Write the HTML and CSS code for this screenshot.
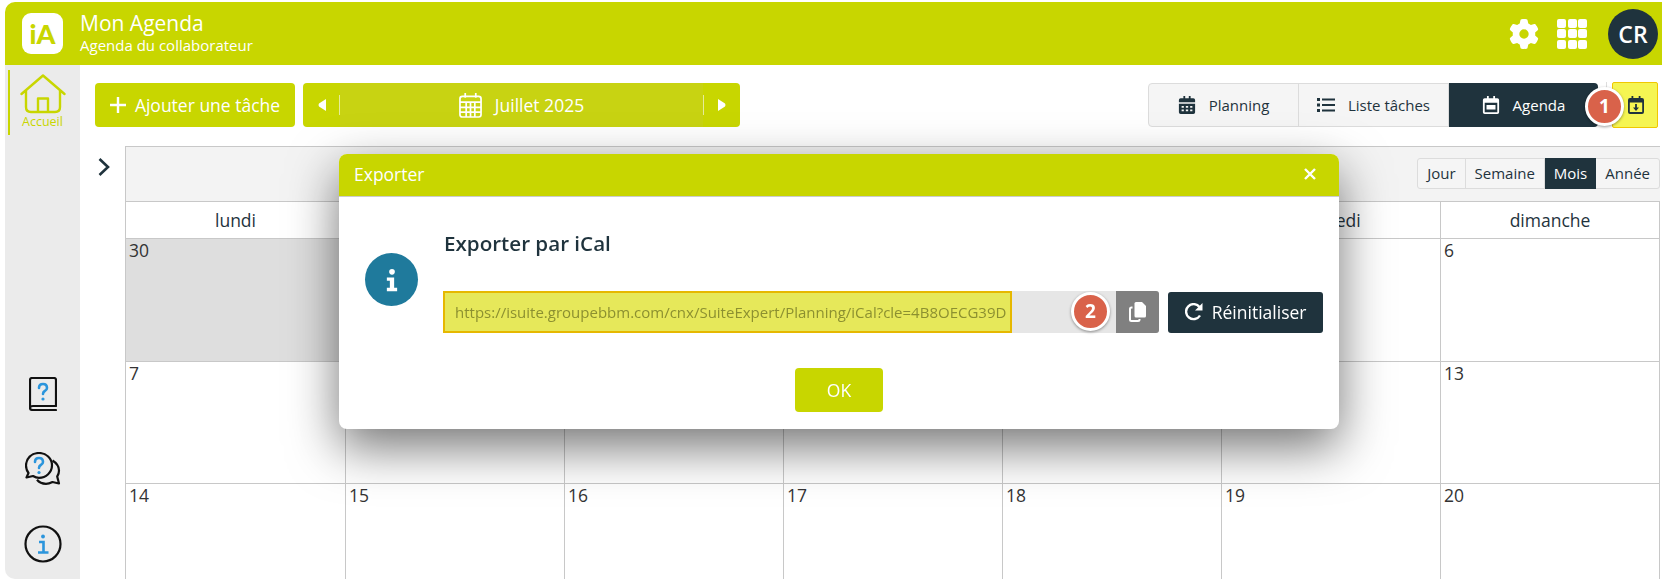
FILE: index.html
```html
<!DOCTYPE html>
<html lang="fr">
<head>
  <meta charset="UTF-8" />
  <meta name="viewport" content="width=device-width, initial-scale=1.0"/>
  <title>Mon Agenda</title>
  <link rel="stylesheet" href="styles.css">
</head>
<body>
  <div class="app">
    <header class="topbar">
      <div class="logo">iA</div>
      <div class="titles">
        <div class="title">Mon Agenda</div>
        <div class="subtitle">Agenda du collaborateur</div>
      </div>
      <svg class="gear" viewBox="0 0 512 512"><path fill="#fff" fill-rule="evenodd" d="M495.9 166.6c3.2 8.700.5 18.400-6.400 24.600l-43.300 39.400c1.100 8.300 1.700 16.800 1.700 25.400s-.6 17.100-1.700 25.400l43.300 39.400c6.900 6.200 9.600 15.900 6.400 24.600-4.400 11.900-9.700 23.300-15.800 34.300l-4.700 8.100c-6.600 11-14 21.400-22.100 31.200-5.900 7.200-15.700 9.600-24.500 6.800l-55.700-17.700c-13.400 10.300-28.200 18.900-44 25.400l-12.500 57.100c-2 9.100-9 16.300-18.200 17.800-13.800 2.300-28 3.500-42.500 3.500s-28.700-1.200-42.500-3.500c-9.200-1.500-16.200-8.700-18.200-17.800l-12.500-57.100c-15.800-6.500-30.600-15.100-44-25.400l-55.600 17.800c-8.800 2.800-18.600.3-24.500-6.800-8.100-9.800-15.500-20.200-22.100-31.200l-4.700-8.100c-6.100-11-11.400-22.400-15.800-34.300-3.200-8.700-.5-18.400 6.400-24.600l43.300-39.400c-1.100-8.400-1.700-16.900-1.700-25.500s.6-17.100 1.700-25.400l-43.300-39.400c-6.900-6.200-9.600-15.900-6.400-24.600 4.400-11.900 9.700-23.300 15.800-34.300l4.700-8.100c6.600-11 14-21.400 22.100-31.200 5.900-7.200 15.700-9.600 24.500-6.800l55.700 17.700c13.400-10.300 28.200-18.900 44-25.400l12.500-57.100c2-9.100 9-16.300 18.200-17.800C227.300 1.200 241.500 0 256 0s28.700 1.200 42.500 3.500c9.200 1.500 16.200 8.700 18.200 17.800l12.500 57.100c15.800 6.500 30.600 15.100 44 25.400l55.700-17.700c8.800-2.800 18.600-.3 24.500 6.800 8.100 9.800 15.500 20.200 22.100 31.200l4.700 8.100c6.100 11 11.400 22.400 15.800 34.300zM256 336a80 80 0 1 0 0-160 80 80 0 1 0 0 160z"/></svg>
      <div class="apps">
        <i></i><i></i><i></i><i></i><i></i><i></i><i></i><i></i><i></i>
      </div>
      <div class="avatar">CR</div>
    </header>

    <div class="main">
      <aside class="sidebar">
        <div class="home">
          <svg class="home-icon" viewBox="0 0 46 40"><path fill="none" stroke="#c8d600" stroke-width="2.4" stroke-linecap="round" stroke-linejoin="round" d="M1.500 20 23 1.500 44.500 20M6 16.500V33q0 5 5 5h24q5 0 5-5V16.500M18 38V24.500h10V38"/></svg>
          <span>Accueil</span>
        </div>
        <div class="side-bottom">
          <svg class="book" viewBox="0 0 28 34"><path fill="none" stroke="#111" stroke-width="2.200" stroke-linecap="round" d="M27 29H4q-3 0-3 2t3 2h23M1 31V3q0-2 2-2h22q2 0 2 2v26"/><path fill="none" stroke="#2b95dc" stroke-width="2.600" stroke-linecap="round" d="M10 11q0-4 4-4t4 4q0 2-2.200 3-1.800 1-1.800 3"/><circle cx="14" cy="22" r="1.600" fill="#2b95dc"/></svg>
          <svg class="chat" viewBox="0 0 36 34"><path fill="none" stroke="#111" stroke-width="2.200" stroke-linejoin="round" d="M14 1C6.500 1 1 6.500 1 13.500c0 3 1 5.500 2.500 7.500L1.500 25.500l6.500-1.500c2 1.200 4 1.800 6 1.800 7 0 13-5.500 13-12.500S21 1 14 1z"/><path fill="none" stroke="#111" stroke-width="2.200" stroke-linejoin="round" d="M27.500 8.500c4 2.500 6.500 6 6.500 10 0 2.300-.6 4.300-1.800 6l1.800 7-6.500-1.500c-2 1-4 1.800-6.500 1.800-4 0-7-1.500-9-4"/><path fill="none" stroke="#2b95dc" stroke-width="2.600" stroke-linecap="round" d="M10 10q0-4 4-4t4 4q0 2-2.200 3-1.800 1-1.800 3"/><circle cx="14" cy="20.500" r="1.600" fill="#2b95dc"/></svg>
          <svg class="about" viewBox="0 0 38 38"><circle cx="19" cy="19" r="17.500" fill="none" stroke="#111" stroke-width="2.200"/><circle cx="19" cy="11.500" r="1.900" fill="#2b95dc"/><path fill="none" stroke="#2b95dc" stroke-width="2.600" d="M15 17h4.500v10M14 27.500h10.500"/></svg>
        </div>
      </aside>

      <section class="content">
        <div class="toolbar">
          <button class="add-btn">
            <svg class="plus" viewBox="0 0 16 16"><path stroke="#fff" stroke-width="2.400" d="M8 0v16M0 8h16"/></svg>
            Ajouter une tâche
          </button>
          <div class="month-nav">
            <div class="nav-arrow left"><svg viewBox="0 0 8 12"><path fill="#fff" d="M8 0v12L1 7.500Q0 6 1 4.500z"/></svg></div>
            <div class="nav-month">
              <svg class="cal-outline" viewBox="0 0 24 26"><path fill="none" stroke="#fff" stroke-width="1.800" d="M3.500 3.500h17q2.500 0 2.500 2.500v16.500q0 2.500-2.500 2.500h-17Q1 25 1 22.500V6q0-2.500 2.500-2.500zM1 9.500h22M1 15h22M1 20h22M7.500 9.500V25M12 9.500V25M16.500 9.500V25M6.500 0v5M17.500 0v5"/></svg>
              Juillet 2025
            </div>
            <div class="nav-arrow right"><svg viewBox="0 0 8 12"><path fill="#fff" d="M0 0v12l7-4.500Q8 6 7 4.500z"/></svg></div>
          </div>
          <div class="tabs">
            <div class="tab">
              <svg viewBox="0 0 18 20"><path fill="#1f333d" fill-rule="evenodd" d="M5 0h2v2.500h4V0h2v2.500h3q2 0 2 2V7H0V4.500q0-2 2-2h3zM0 8.500h18V18q0 2-2 2H2q-2 0-2-2zM3 11v2h2.500v-2zm4.700 0v2h2.600v-2zm4.800 0v2H15v-2zM3 15v2h2.500v-2zm4.700 0v2h2.600v-2zm4.800 0v2H15v-2z"/></svg>
              Planning
            </div>
            <div class="tab">
              <svg viewBox="0 0 18 14"><path fill="#1f333d" d="M0 0h3v3H0zM0 5.500h3v3H0zM0 11h3v3H0zM5 .5h13v2H5zM5 6h13v2H5zM5 11.500h13v2H5z"/></svg>
              Liste tâches
            </div>
            <div class="tab active">
              <svg viewBox="0 0 18 20"><path fill="#fff" fill-rule="evenodd" d="M4.500 0h2v2.500h5V0h2v2.500H16q2 0 2 2V18q0 2-2 2H2q-2 0-2-2V4.500q0-2 2-2h2.500zM2 7.500V18h14V7.500zM4 10h10v5H4z"/></svg>
              Agenda
            </div>
            <span class="badge badge-one">1</span>
          </div>
          <i class="tool-sep"></i>
          <button class="export-btn">
            <svg viewBox="0 0 16 18"><path fill="#1f333d" fill-rule="evenodd" d="M3.500 0h1.800v2h5.400V0h1.800v2H14q2 0 2 2v12q0 2-2 2H2q-2 0-2-2V4q0-2 2-2h1.500zM1.800 6.500V16h12.400V6.500z"/><path fill="#1f333d" d="M7.100 8h1.800v3.500h2.100L8 15l-3-3.500h2.100z"/></svg>
          </button>
        </div>

        <div class="cal-row">
          <svg class="chevron" viewBox="0 0 12 18"><path fill="none" stroke="#1f333d" stroke-width="2.600" d="M1.500 1 10 9l-8.500 8"/></svg>
          <div class="calendar">
            <div class="cal-head">
              <div class="views">
                <span class="view">Jour</span>
                <span class="view">Semaine</span>
                <span class="view current">Mois</span>
                <span class="view">Année</span>
              </div>
            </div>
            <div class="grid days">
              <div class="day-name">lundi</div>
              <div class="day-name">mardi</div>
              <div class="day-name">mercredi</div>
              <div class="day-name">jeudi</div>
              <div class="day-name">vendredi</div>
              <div class="day-name">samedi</div>
              <div class="day-name">dimanche</div>
            </div>
            <div class="grid">
              <div class="cell other">30</div><div class="cell">1</div><div class="cell">2</div><div class="cell">3</div><div class="cell">4</div><div class="cell">5</div><div class="cell">6</div>
              <div class="cell">7</div><div class="cell">8</div><div class="cell">9</div><div class="cell">10</div><div class="cell">11</div><div class="cell">12</div><div class="cell">13</div>
              <div class="cell">14</div><div class="cell">15</div><div class="cell">16</div><div class="cell">17</div><div class="cell">18</div><div class="cell">19</div><div class="cell">20</div>
            </div>
          </div>
        </div>
      </section>
    </div>
  </div>

  <div class="modal">
    <div class="modal-head">
      <span>Exporter</span>
      <svg class="close" viewBox="0 0 12 12"><path stroke="#fff" stroke-width="2.400" d="M1 1l10 10M11 1 1 11"/></svg>
    </div>
    <div class="modal-body">
      <div class="info-round">
        <svg viewBox="0 0 14 26"><circle cx="7" cy="3.500" r="3.300" fill="#fff"/><path fill="#fff" d="M1 10h8.500v12H13v4H1v-4h3.500v-8H1z"/></svg>
      </div>
      <div class="export-box">
        <h3>Exporter par iCal</h3>
        <div class="link-row">
          <div class="link-group">
            <div class="link-text">https://isuite.groupebbm.com/cnx/SuiteExpert/Planning/iCal?cle=4B8OECG39D</div>
            <span class="badge badge-two">2</span>
            <div class="copy-btn">
              <svg viewBox="0 0 17 20"><path fill="#fff" d="M7 0h6l4 4v10q0 1.500-1.500 1.500H7Q5.500 15.500 5.500 14V1.500Q5.500 0 7 0z"/><path fill="none" stroke="#fff" stroke-width="2" d="M3.500 5.500H2.500Q1 5.500 1 7v10.500Q1 19 2.500 19h6.500q1.500 0 1.500-1.500v-.500"/></svg>
            </div>
          </div>
          <button class="reset-btn">
            <svg viewBox="0 0 18 18"><path fill="none" stroke="#fff" stroke-width="2.400" d="M15 12.500A7.500 7.500 0 1 1 14.500 4"/><path fill="#fff" d="M17.500 0v7.500H10z"/></svg>
            Réinitialiser
          </button>
        </div>
      </div>
    </div>
    <div class="modal-foot">
      <button class="ok-btn">OK</button>
    </div>
  </div>
</body>
</html>
```

FILE: styles.css
```css
* {
  box-sizing: border-box;
}
html, body {
  height: 100%;
}
body {
  font-family: "Open Sans", sans-serif;
  background-color: #fff;
  color: #1f333d;
  margin: 0;
  overflow: hidden;
}
button {
  font-family: inherit;
  border: none;
  cursor: pointer;
}
.app {
  padding: 2px 0 0 5px;
  height: 100%;
  display: flex;
  flex-direction: column;
}

/* Top bar */
.topbar {
  height: 63px;
  flex: none;
  background-color: #c8d600;
  border-top-left-radius: 10px;
  display: flex;
  align-items: center;
  padding-left: 17px;
  padding-right: 4px;
}
.logo {
  width: 41px;
  height: 41px;
  background: #fff;
  border-radius: 9px;
  color: #c8d600;
  font-family: Lato, sans-serif;
  font-weight: 900;
  font-size: 27px;
  text-align: center;
  line-height: 41px;
}
.titles {
  margin-left: 17px;
  padding-bottom: 2px;
  color: #fff;
  flex: 1;
}
.title {
  font-size: 21px;
  line-height: 24px;
}
.subtitle {
  font-size: 15px;
  line-height: 20px;
}
.gear {
  width: 30px;
  height: 32px;
  margin-right: 18px;
}
.apps {
  width: 30px;
  height: 30px;
  display: grid;
  grid-template-columns: repeat(3, 9px);
  grid-auto-rows: 9px;
  gap: 1.500px;
  margin-right: 21px;
}
.apps i {
  background: #fff;
  border-radius: 2px;
}
.avatar {
  width: 50px;
  height: 50px;
  border-radius: 50%;
  background-color: #1f333d;
  color: #fff;
  font-size: 23px;
  font-weight: 600;
  text-align: center;
  line-height: 50px;
}

/* Main layout */
.main {
  flex: 1;
  display: flex;
  min-height: 0;
}
.sidebar {
  width: 75px;
  flex: none;
  background-color: #ebebeb;
  border-bottom-left-radius: 10px;
  display: flex;
  flex-direction: column;
  padding-top: 5px;
}
.home {
  margin-left: 3px;
  height: 65px;
  border-left: 2.500px solid #c8d600;
  display: flex;
  flex-direction: column;
  align-items: center;
  padding-right: 5px;
  padding-top: 4px;
  color: #c8d600;
  font-size: 12.500px;
}
.home-icon {
  width: 46px;
  height: 40px;
  display: block;
}
.home span {
  line-height: 16px;
}
.side-bottom {
  display: flex;
  flex-direction: column;
  align-items: center;
  padding-top: 242px;
}
.book {
  width: 28px;
  height: 34px;
}
.chat {
  width: 36px;
  height: 34px;
  margin-top: 41px;
}
.about {
  width: 38px;
  height: 38px;
  margin-top: 39px;
}
.content {
  flex: 1;
  min-width: 0;
}

/* Toolbar */
.toolbar {
  display: flex;
  align-items: center;
  height: 46px;
  margin-top: 17px;
  padding-left: 15px;
  padding-right: 4px;
}
.add-btn {
  width: 200px;
  height: 44px;
  background-color: #c8d600;
  color: #fff;
  font-size: 17.500px;
  border-radius: 4px;
  display: flex;
  align-items: center;
  justify-content: center;
  gap: 9px;
  padding: 0;
}
.plus {
  width: 16px;
  height: 16px;
}
.month-nav {
  margin-left: 8px;
  width: 437px;
  height: 44px;
  display: flex;
  border-radius: 4px;
  overflow: hidden;
  background-color: #c8d600;
  color: #fff;
  font-size: 17.500px;
}
.nav-arrow {
  width: 37px;
  display: flex;
  align-items: center;
  justify-content: center;
  position: relative;
}
.nav-arrow svg {
  width: 8px;
  height: 12px;
}
.nav-arrow.left::after,
.nav-arrow.right::after {
  content: "";
  position: absolute;
  top: 12px;
  height: 20px;
  width: 1px;
  background: #e6ec99;
}
.nav-arrow.left::after {
  right: 0;
}
.nav-arrow.right::after {
  left: 0;
}
.nav-month {
  flex: 1;
  background-color: #c8d312;
  display: flex;
  align-items: center;
  justify-content: center;
  gap: 13px;
}
.cal-outline {
  width: 23px;
  height: 25px;
}
.tabs {
  margin-left: auto;
  height: 44px;
  width: 450px;
  display: flex;
  position: relative;
  border-radius: 4px;
  background: #f5f5f5;
  border: 1px solid #dcdcdc;
}
.tab {
  flex: 1 1 0;
  display: flex;
  align-items: center;
  justify-content: center;
  gap: 13px;
  font-size: 15px;
  color: #1f333d;
  border-right: 1px solid #dcdcdc;
}
.tab svg {
  width: 18px;
  height: 18px;
}
.tab.active {
  background-color: #1f333d;
  color: #fff;
  border-right: 0;
  margin: -1px -1px -1px 0;
  border-radius: 0 4px 4px 0;
}
.tool-sep {
  width: 1px;
  height: 8px;
  background: #ddd;
  align-self: flex-start;
  margin: 0 5px 0 8px;
}
.export-btn {
  width: 46px;
  height: 46px;
  padding: 0 0 0 2px;
  background-color: #f5f552;
  border: 1px solid #f0c800;
  border-radius: 2px;
  display: flex;
  align-items: center;
  justify-content: center;
}
.export-btn svg {
  width: 16px;
  height: 18px;
}

/* Numbered callouts */
.badge {
  position: absolute;
  width: 39px;
  height: 39px;
  border-radius: 50%;
  background-color: #d9624a;
  border: 3px solid #fff;
  box-shadow: 0 1px 3px rgba(0,0,0,0.4);
  color: #fff;
  font-weight: 700;
  font-size: 19px;
  text-align: center;
  line-height: 33px;
}
.badge-one {
  right: -27px;
  top: 3px;
}
.badge-two {
  left: 628px;
  top: 1px;
}

/* Calendar */
.cal-row {
  display: flex;
  margin-top: 18px;
  padding-left: 15px;
}
.chevron {
  width: 12px;
  height: 18px;
  flex: none;
  margin-top: 12px;
  margin-right: 18px;
  margin-left: 3px;
}
.calendar {
  width: 1535px;
  margin-left: -3px;
  border-left: 1px solid #c8c8c8;
  border-top: 1px solid #c8c8c8;
  background: #fff;
}
.cal-head {
  height: 55px;
  background-color: #f3f3f3;
  border-bottom: 1px solid #c8c8c8;
  display: flex;
  justify-content: flex-end;
  padding-top: 11px;
}
.views {
  display: flex;
  height: 31px;
  background: #f5f5f5;
  border: 1px solid #dcdcdc;
  border-radius: 3px;
  font-size: 15px;
}
.view {
  padding: 0 9px;
  line-height: 29px;
  border-right: 1px solid #dcdcdc;
}
.view:last-child {
  border-right: 0;
}
.view.current {
  background-color: #1f333d;
  color: #fff;
  border-right: 0;
  margin: -1px 0;
  line-height: 31px;
}
.grid {
  display: grid;
  grid-template-columns: 220px repeat(6, 219px);
}
.day-name {
  height: 37px;
  line-height: 36px;
  text-align: center;
  font-size: 17.500px;
  border-right: 1px solid #c8c8c8;
  border-bottom: 1px solid #c8c8c8;
}
.cell {
  height: 122.500px;
  padding-left: 3px;
  font-size: 17.500px;
  line-height: 22px;
  color: #333;
  border-right: 1px solid #c8c8c8;
  border-bottom: 1px solid #c8c8c8;
}
.cell.other {
  background-color: #dedede;
}

/* Export dialog */
.modal {
  position: fixed;
  left: 339px;
  top: 154px;
  width: 1000px;
  height: 275px;
  background: #fff;
  border-radius: 8px;
  box-shadow: 0 18px 50px rgba(0,0,0,0.55);
  display: flex;
  flex-direction: column;
}
.modal-head {
  height: 43px;
  flex: none;
  background-color: #c8d600;
  border-bottom: 1px solid #ccc;
  border-radius: 8px 8px 0 0;
  color: #fff;
  font-size: 17.500px;
  display: flex;
  align-items: center;
  justify-content: space-between;
  padding: 0 23px 2px 15px;
}
.close {
  width: 12px;
  height: 12px;
}
.modal-body {
  display: flex;
  padding-left: 26px;
}
.info-round {
  width: 53px;
  height: 53px;
  border-radius: 50%;
  background-color: #1f7a9c;
  display: flex;
  align-items: center;
  justify-content: center;
  margin-top: 56px;
  flex: none;
}
.info-round svg {
  width: 12px;
  height: 28px;
}
.export-box {
  margin-left: 25px;
  width: 880px;
}
.export-box h3 {
  margin: 32px 0 0 1px;
  font-size: 20.600px;
  font-weight: 600;
  line-height: 28px;
  color: #1f333d;
}
.link-row {
  display: flex;
  margin-top: 34px;
  align-items: center;
}
.link-group {
  width: 717px;
  height: 42px;
  display: flex;
  position: relative;
  background-color: #e6e6e6;
  border-radius: 3px;
}
.link-text {
  width: 569px;
  background-color: #e6e85a;
  border: 2px solid #e6b800;
  color: #8c9030;
  font-size: 15px;
  line-height: 38px;
  padding-left: 10px;
  white-space: nowrap;
  overflow: hidden;
}
.copy-btn {
  margin-left: auto;
  width: 43px;
  background-color: #808080;
  border-radius: 0 3px 3px 0;
  display: flex;
  align-items: center;
  justify-content: center;
}
.copy-btn svg {
  width: 17px;
  height: 20px;
}
.reset-btn {
  margin-left: 9px;
  width: 155px;
  height: 41px;
  background-color: #1f333d;
  color: #fff;
  font-size: 17.500px;
  border-radius: 3px;
  display: flex;
  align-items: center;
  justify-content: center;
  gap: 9px;
  padding: 0;
}
.reset-btn svg {
  width: 18px;
  height: 18px;
}
.modal-foot {
  display: flex;
  justify-content: center;
  margin-top: 35px;
}
.ok-btn {
  width: 88px;
  height: 44px;
  background-color: #c8d600;
  color: #fff;
  font-size: 17.500px;
  border-radius: 4px;
}
```
